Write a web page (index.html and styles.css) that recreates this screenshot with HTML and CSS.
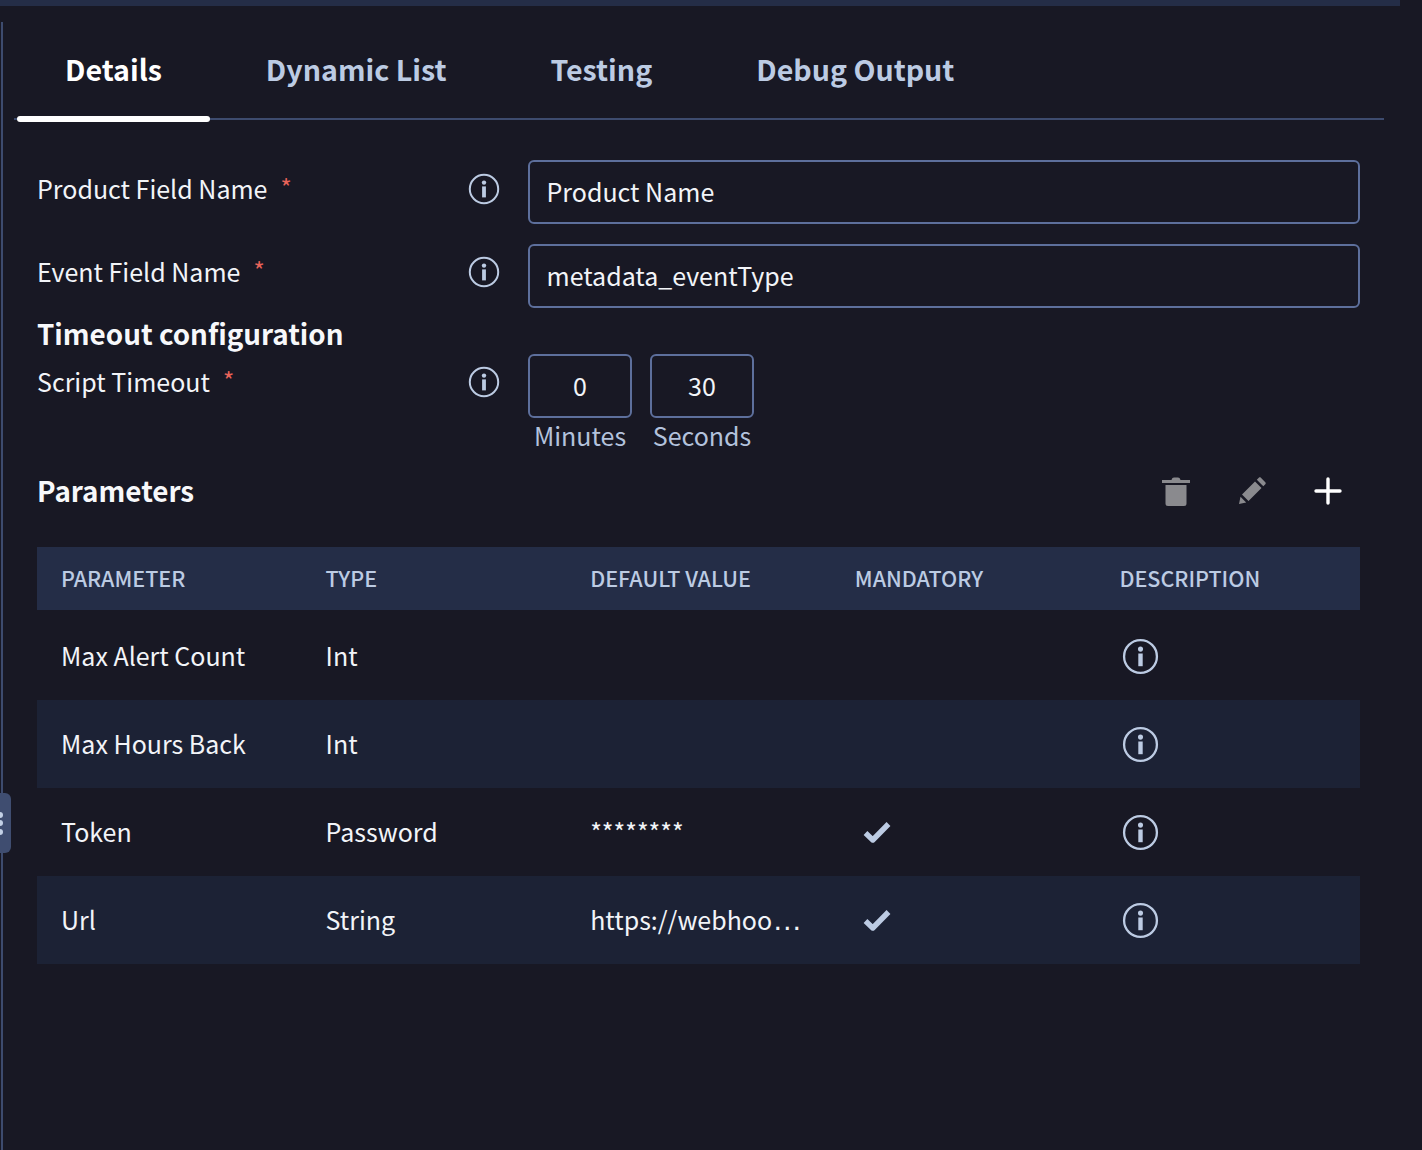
FILE: index.html
```html
<!DOCTYPE html>
<html lang="en">
<head>
<meta charset="utf-8">
<title>Details</title>
<link rel="stylesheet" href="styles.css">
</head>
<body>
<svg class="defs" width="0" height="0" aria-hidden="true">
  <symbol id="info" viewBox="0 0 32 32">
    <circle cx="16" cy="16" r="14.2" fill="none" stroke="currentColor" stroke-width="2"/>
    <circle cx="16" cy="9.600" r="2.200" fill="currentColor"/>
    <rect x="14.100" y="13.400" width="3.800" height="11" fill="currentColor"/>
  </symbol>
  <symbol id="check" viewBox="0 0 28 22">
    <path d="M2.500 12 9.800 19 25.500 3" fill="none" stroke="currentColor" stroke-width="5.400" stroke-linejoin="round"/>
  </symbol>
</svg>
<div class="topbar"></div>
<div class="handle"><i></i><i></i><i></i></div>
<main class="panel">
  <nav class="tabs">
    <a class="tab active">Details</a>
    <a class="tab">Dynamic List</a>
    <a class="tab">Testing</a>
    <a class="tab">Debug Output</a>
  </nav>
  <div class="content">
    <div class="row">
      <label class="label">Product Field Name<span class="req">*</span></label>
      <svg class="info"><use href="#info"/></svg>
      <div class="input">Product Name</div>
    </div>
    <div class="row tight">
      <label class="label">Event Field Name<span class="req">*</span></label>
      <svg class="info"><use href="#info"/></svg>
      <div class="input">metadata_eventType</div>
    </div>
    <h3 class="section">Timeout configuration</h3>
    <div class="row timeout">
      <label class="label">Script Timeout<span class="req">*</span></label>
      <svg class="info"><use href="#info"/></svg>
      <div class="times">
        <div class="time"><div class="box">0</div><span>Minutes</span></div>
        <div class="time"><div class="box">30</div><span>Seconds</span></div>
      </div>
    </div>
    <div class="params-head">
      <h3 class="section">Parameters</h3>
      <div class="tools">
        <svg class="tool" viewBox="0 0 28 32"><path fill="#8a8a8e" d="M0 5h9.500c.4-1.700 1.400-2.500 2.500-2.500h4c1.100 0 2.100.8 2.500 2.500H28v3H0zM3.500 10h21v18.500a2.500 2.500 0 0 1-2.500 2.500H6a2.500 2.500 0 0 1-2.500-2.500z"/></svg>
        <svg class="tool" viewBox="0 0 28 28"><path fill="#8a8a8e" d="M1 27l1.500-7.200 5.700 5.700zM4 17.500 17 4.500l6.500 6.500-13 13zM18.800 2.800l2-2c.6-.6 1.500-.6 2.100 0l4.400 4.400c.6.600.6 1.500 0 2.100l-2 2z"/></svg>
        <svg class="tool plus" viewBox="0 0 28 28"><path d="M14 2v24M2 14h24" fill="none" stroke="#fff" stroke-width="3.400" stroke-linecap="round"/></svg>
      </div>
    </div>
    <div class="table">
      <div class="tr th"><div>PARAMETER</div><div>TYPE</div><div>DEFAULT VALUE</div><div>MANDATORY</div><div>DESCRIPTION</div></div>
      <div class="tr first"><div>Max Alert Count</div><div>Int</div><div></div><div></div><div><svg class="info large"><use href="#info"/></svg></div></div>
      <div class="tr alt"><div>Max Hours Back</div><div>Int</div><div></div><div></div><div><svg class="info large"><use href="#info"/></svg></div></div>
      <div class="tr"><div>Token</div><div>Password</div><div class="mask">********</div><div><svg class="check"><use href="#check"/></svg></div><div><svg class="info large"><use href="#info"/></svg></div></div>
      <div class="tr alt"><div>Url</div><div>String</div><div>https://webhoo<span class="dots">…</span></div><div><svg class="check"><use href="#check"/></svg></div><div><svg class="info large"><use href="#info"/></svg></div></div>
    </div>
  </div>
</main>
</body>
</html>
```
FILE: styles.css
```css
* { box-sizing: border-box; }
html, body { margin: 0; height: 1150px; overflow: hidden; background: #181824; }
body {
  position: relative;
  font-family: "Noto Sans CJK JP", "Noto Sans", sans-serif;
  font-size: 25px;
  color: #f2f4f8;
}
.defs { position: absolute; }
.topbar { height: 6px; width: 1400px; background: #242d47; }
.panel {
  margin: 16px 0 0 1px;
  width: 1383px;
  height: 1128px;
  border-left: 2px solid #3d4b6e;
  padding-left: 11px;
}
.handle {
  position: absolute;
  left: 0; top: 793px;
  width: 11px; height: 60px;
  background: #3f4d70;
  border-radius: 0 6px 6px 0;
  display: flex; flex-direction: column; justify-content: center; gap: 2.500px;
  z-index: 2;
}
.handle i { width: 6px; height: 6px; border-radius: 50%; background: #c3d0e5; margin-left: -3px; }
.tabs {
  display: flex;
  gap: 8px;
  height: 98px;
  padding-left: 3px;
  border-bottom: 2px solid #3d4b6e;
}
.tab {
  position: relative;
  padding: 0 48px;
  height: 96px;
  line-height: 94px;
  font-size: 28.600px;
  font-weight: 700;
  color: #bccbe3;
}
.tab.active { color: #fff; }
.tab.active::after {
  content: "";
  position: absolute;
  left: 0; right: 0; bottom: -4px;
  height: 6px;
  border-radius: 3px;
  background: #fff;
}
.content { padding: 40px 24px 0 23px; }
.row { display: flex; align-items: flex-start; height: 64px; margin-bottom: 20px; }
.label { width: 431px; line-height: 56px; flex: none; }
.req { color: #e8645a; font-size: 24px; margin-left: 13px; position: relative; top: -2px; }
.info { width: 32px; height: 32px; color: #bccbe3; flex: none; margin-top: 13px; }
.row.tight .label { line-height: 54px; }
.row.tight .info { margin-top: 12px; }
.input {
  margin-left: 28px;
  flex: 1;
  height: 64px;
  line-height: 58px;
  padding: 0 16.500px;
  border: 2px solid #5d6f9c;
  border-radius: 6px;
}
.section { margin: 0; font-size: 27.800px; font-weight: 700; color: #f7f8fb; line-height: 36px; }
.row + .section { margin-top: -13px; }
.row.timeout { height: auto; margin: 4px 0 0; position: relative; top: -1px; }
.row.timeout .label { line-height: 54px; }
.row.timeout .info { margin-top: 12px; }
.times { display: flex; gap: 18px; margin-left: 28px; }
.time { width: 104px; display: flex; flex-direction: column; align-items: center; color: #b3c2dc; }
.time span { line-height: 34px; white-space: nowrap; }
.box {
  width: 104px; height: 64px; line-height: 58px; text-align: center;
  border: 2px solid #5d6f9c; border-radius: 6px; color: #f2f4f8;
}
.params-head { display: flex; justify-content: space-between; align-items: center; margin-top: 18px; height: 40px; }
.params-head .section { margin-bottom: 2px; }
.tools { display: flex; align-items: center; gap: 48px; padding-right: 18px; }
.tool { width: 28px; height: 32px; display: block; }
.table { margin-top: 36px; }
.tr { display: grid; grid-template-columns: repeat(5, 1fr); height: 88px; align-items: center; }
.tr.first { margin-top: 2px; }
.tr > div { padding: 0 24px 2px; white-space: nowrap; overflow: hidden; line-height: 38px; }
.tr.th { height: 63px; background: #242d47; font-size: 21.500px; font-weight: 500; color: #bccbe3; }
.tr.alt { background: #1c2235; }
.tr .info.large { width: 37px; height: 37px; margin: 2px 0 0 2.500px; display: block; }
.mask { position: relative; top: 0; }
.dots { font-family: "Liberation Sans", sans-serif; font-size: 30px; line-height: 0; }
.check { width: 28px; height: 22px; color: #bccbe3; margin: 2px 0 0 8px; display: block; }
```
